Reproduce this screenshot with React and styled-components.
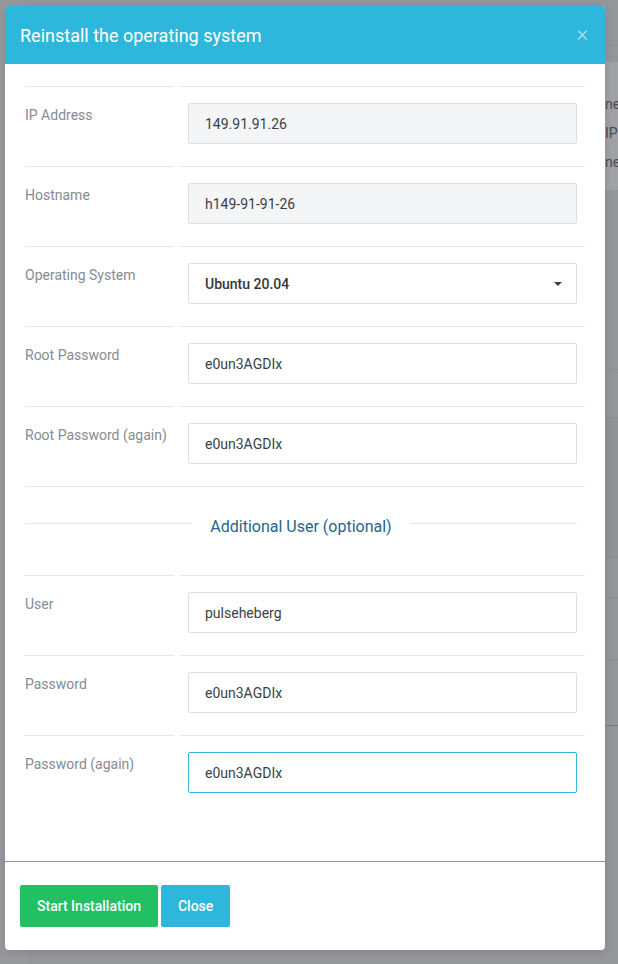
import React from "react";
import styled, { createGlobalStyle } from "styled-components";

const GlobalStyle = createGlobalStyle`
  html, body {
    margin: 0;
    padding: 0;
  }
  body {
    font-family: Roboto, "Liberation Sans", sans-serif;
    background-color: #959699;
  }
  * {
    box-sizing: border-box;
  }
`;

const Page = styled.div`
  position: relative;
  height: 100vh;
  min-height: 964px;
  overflow: hidden;
  background-color: #8f9094;
  display: flex;
`;

const PageSide = styled.div`
  width: 28px;
  flex: none;
  background-color: #97989b;
`;

const PageMain = styled.div`
  flex: 1;
  display: flex;
  flex-direction: column;
  background-color: #959699;
`;

const PageTop = styled.div`
  height: 46px;
  border-bottom: 1px solid #8c8d91;
`;

const PageCard = styled.div`
  margin-top: 16px;
  height: 128px;
  padding: 28px 0 0 577px;
  background-color: #a0a1a4;
  color: #4a4c50;
  font-size: 14px;
  line-height: 29px;
  white-space: nowrap;
`;

const PageRow = styled.div`
  height: ${(p) => p.$h}px;
  border-bottom: 1px solid ${(p) => p.$line || "#8a8b8f"};
  background-color: ${(p) => p.$bg || "transparent"};
`;

const Modal = styled.div`
  position: absolute;
  top: 6px;
  left: 5px;
  width: 600px;
  background-color: #ffffff;
  border-radius: 4px;
  overflow: hidden;
  box-shadow: 0 2px 8px rgba(0, 0, 0, 0.12);
`;

const Header = styled.div`
  height: 58px;
  padding: 0 20px 0 15px;
  background-color: #2eb7dc;
  display: flex;
  align-items: center;
  justify-content: space-between;
`;

const Title = styled.h4`
  margin: 0;
  font-size: 18px;
  font-weight: 400;
  color: #ffffff;
`;

const CloseX = styled.span`
  font-size: 22px;
  font-weight: 300;
  line-height: 1;
  color: rgba(255, 255, 255, 0.6);
  margin-top: -3px;
  margin-right: -3px;
`;

const Body = styled.div`
  padding: 22px 20px 46px 20px;
`;

const Form = styled.div`
  display: grid;
  grid-template-columns: 149px 1fr;
  column-gap: 6px;
`;

const LabelCell = styled.div`
  border-top: 1px solid #e6e7e9;
  padding-top: 18px;
  height: 80px;
  font-size: 14px;
  line-height: 20px;
  color: #878b92;
  white-space: nowrap;
`;

const FieldCell = styled.div`
  border-top: 1px solid #e6e7e9;
  padding: 16px 8px 22px 8px;
  height: 80px;
`;

const Input = styled.input`
  display: block;
  width: 100%;
  height: 41px;
  padding: 0 16px;
  border: 1px solid ${(p) => (p.$focused ? "#2eb7dc" : "#dcdfe3")};
  border-radius: 2px;
  background-color: ${(p) => (p.readOnly && !p.$editable ? "#f4f5f7" : "#ffffff")};
  font-family: Roboto, "Liberation Sans", sans-serif;
  font-size: 14px;
  color: #3b3f45;
  outline: none;
`;

const Select = styled.div`
  height: 41px;
  padding: 0 14px 0 16px;
  border: 1px solid #dcdfe3;
  border-radius: 2px;
  display: flex;
  align-items: center;
  justify-content: space-between;
  font-size: 14px;
  font-weight: 500;
  color: #33373c;
`;

const SectionCell = styled.div`
  grid-column: 1 / span 2;
  border-top: 1px solid #e6e7e9;
  height: 89px;
  padding: 28px 8px 0 0;
`;

const Divider = styled.div`
  height: 22px;
  display: flex;
  align-items: center;
  gap: 18px;

  &::before,
  &::after {
    content: "";
    flex: 1;
    height: 1px;
    background-color: #e2e3e6;
    margin-top: -5px;
  }
`;

const DividerText = styled.span`
  font-size: 16px;
  color: #1f6591;
  white-space: nowrap;
`;

const Footer = styled.div`
  border-top: 1px solid #2eb7dc;
  padding: 23px 15px;
  display: flex;
  gap: 3px;
`;

const Button = styled.button`
  height: 42px;
  padding: 0 17px;
  border: none;
  border-radius: 2px;
  background-color: ${(p) => p.$color};
  color: #ffffff;
  font-family: Roboto, "Liberation Sans", sans-serif;
  font-size: 14px;
  font-weight: 500;
  cursor: pointer;
`;

const Caret = () => (
  <svg width="8" height="4" viewBox="0 0 8 4">
    <path d="M0 0 H8 L4 4 Z" fill="#3b3f45" />
  </svg>
);

const Field = ({ label, children }) => (
  <>
    <LabelCell>{label}</LabelCell>
    <FieldCell>{children}</FieldCell>
  </>
);

const App = () => {
  return (
    <>
      <GlobalStyle />
      <Page>
        <PageSide />
        <PageMain>
          <PageTop />
          <PageCard>
            ne
            <br />
            IP
            <br />
            ne
          </PageCard>
          <PageRow $h={180} $line="#8d8e92" />
          <PageRow $h={48} />
          <PageRow $h={140} $bg="#929397" />
          <PageRow $h={40} />
          <PageRow $h={62} />
          <PageRow $h={66} $line="#4f9a5c" />
        </PageMain>

        <Modal>
          <Header>
            <Title>Reinstall the operating system</Title>
            <CloseX>×</CloseX>
          </Header>
          <Body>
            <Form>
              <Field label="IP Address">
                <Input value="149.91.91.26" readOnly />
              </Field>
              <Field label="Hostname">
                <Input value="h149-91-91-26" readOnly />
              </Field>
              <Field label="Operating System">
                <Select>
                  Ubuntu 20.04
                  <Caret />
                </Select>
              </Field>
              <Field label="Root Password">
                <Input value="e0un3AGDIx" readOnly $editable />
              </Field>
              <Field label="Root Password (again)">
                <Input value="e0un3AGDIx" readOnly $editable />
              </Field>
              <SectionCell>
                <Divider>
                  <DividerText>Additional User (optional)</DividerText>
                </Divider>
              </SectionCell>
              <Field label="User">
                <Input value="pulseheberg" readOnly $editable />
              </Field>
              <Field label="Password">
                <Input value="e0un3AGDIx" readOnly $editable />
              </Field>
              <Field label="Password (again)">
                <Input value="e0un3AGDIx" readOnly $editable $focused />
              </Field>
            </Form>
          </Body>
          <Footer>
            <Button $color="#20c063">Start Installation</Button>
            <Button $color="#2eb7dc">Close</Button>
          </Footer>
        </Modal>
      </Page>
    </>
  );
};

export default App;
